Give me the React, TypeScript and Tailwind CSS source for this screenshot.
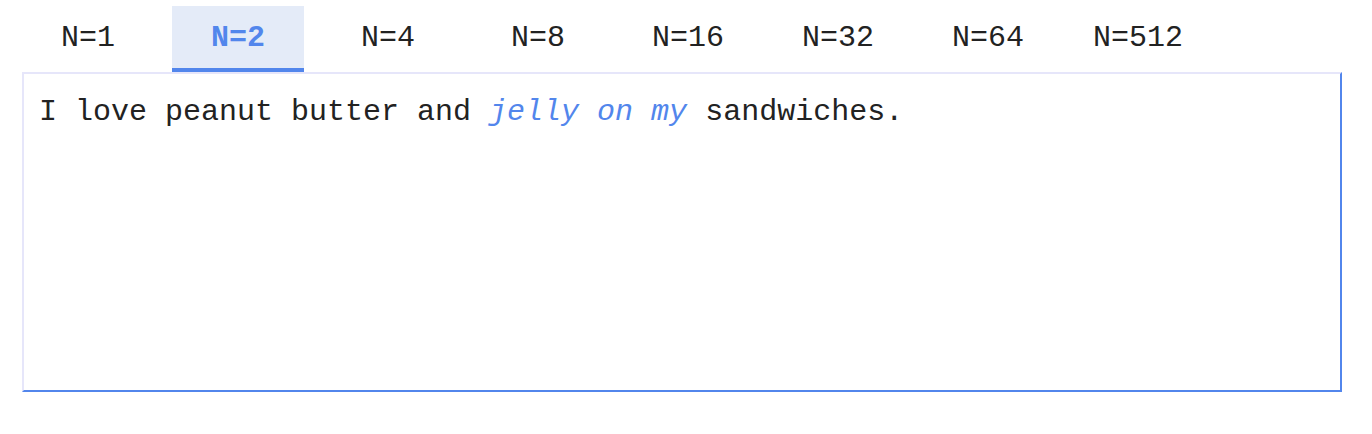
import React from "react";

const tabs = ["N=1", "N=2", "N=4", "N=8", "N=16", "N=32", "N=64", "N=512"];

export default function App() {
  const active = 1;
  return (
    <div
      className="w-[1372px] h-[434px] bg-white pl-[22px] pt-[6px]"
      style={{ fontFamily: '"Liberation Mono", "Courier New", monospace' }}
    >
      <div className="flex gap-[18px]">
        {tabs.map((t, i) => (
          <div
            key={t}
            className={
              i === active
                ? "w-[132px] h-[66px] pt-[2px] flex items-center justify-center text-[30px] font-bold text-[#5286ec] bg-[#e4ebf8] border-b-4 border-[#5286ec]"
                : "w-[132px] h-[66px] pt-[2px] flex items-center justify-center text-[30px] text-[#222] border-b-4 border-transparent"
            }
          >
            {t}
          </div>
        ))}
      </div>
      <div className="w-[1320px] h-[320px] border-2 border-t-[#e6e6fa] border-l-[#e6e6fa] border-r-[#5286ec] border-b-[#5286ec] pl-[15px] pt-[20px] text-[30px] leading-[1.2] text-[#222]">
        I love peanut butter and{" "}
        <span className="italic text-[#5286ec]">jelly on my</span> sandwiches.
      </div>
    </div>
  );
}
